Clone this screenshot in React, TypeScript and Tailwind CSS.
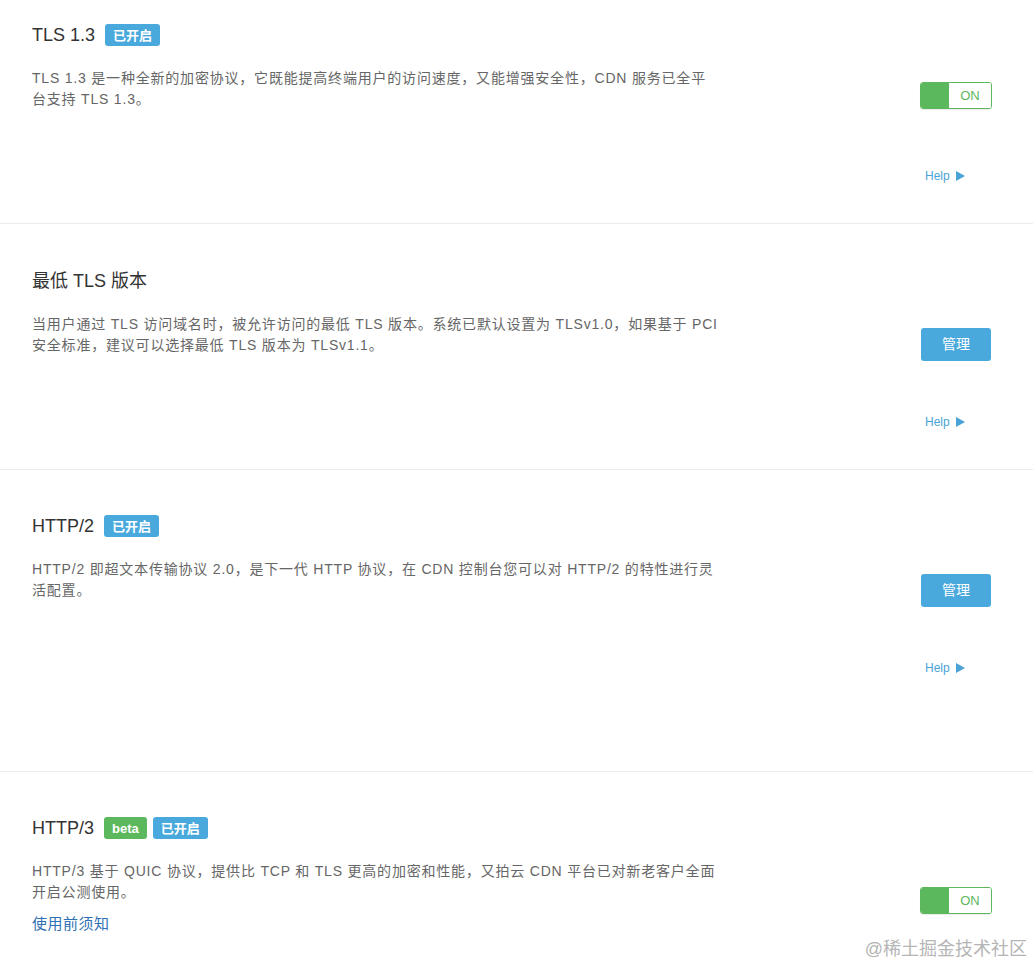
import React from "react";

const FONT = {
  fontFamily:
    '"Liberation Sans", "Noto Sans CJK SC", Arial, sans-serif',
};

const Badge = ({
  children,
  color,
}: {
  children: React.ReactNode;
  color: "blue" | "green";
}) => (
  <span
    className={`inline-flex h-[22px] items-center rounded-[3px] px-[8px] text-[13px] font-bold leading-none text-white ${
      color === "blue" ? "bg-[#4aa9dc]" : "bg-[#5cb85c]"
    }`}
  >
    {children}
  </span>
);

const Toggle = () => (
  <div className="flex h-[27px] w-[72px] overflow-hidden rounded-[3px] border border-[#5cb85c] shadow-[0_1px_1px_rgba(0,0,0,0.08)]">
    <div className="w-[28px] bg-[#5cb85c]" />
    <div className="flex flex-1 items-center justify-center bg-white text-[13px] text-[#5cb85c]">
      ON
    </div>
  </div>
);

const ManageButton = () => (
  <button className="ml-px flex h-[33px] w-[70px] items-center justify-center rounded-[3px] bg-[#4aa9dc] text-[14px] text-white">
    管理
  </button>
);

const Help = () => (
  <div className="flex items-center pl-[5px] text-[12px] leading-[16px] text-[#4aa3d6]">
    <span>Help</span>
    <svg className="ml-[6px]" width="9" height="10" viewBox="0 0 9 10">
      <polygon points="0,0 9,5 0,10" fill="#4aa3d6" />
    </svg>
  </div>
);

type SectionProps = {
  title: string;
  badges: { text: string; color: "blue" | "green" }[];
  lines: string[];
  control: "toggle" | "button";
  controlTop: number;
  showHelp?: boolean;
  link?: string;
  className: string;
};

const Section = ({
  title,
  badges,
  lines,
  control,
  controlTop,
  showHelp = true,
  link,
  className,
}: SectionProps) => (
  <section
    className={`box-border flex border-b border-[#ebebeb] pl-[32px] pr-[41px] ${className}`}
  >
    <div className="flex-1">
      <div className="flex h-[24px] items-center">
        <h3 className="text-[18px] leading-[24px] text-[#333]">{title}</h3>
        <div className="ml-[10px] flex gap-[6px]">
          {badges.map((b) => (
            <Badge key={b.text} color={b.color}>
              {b.text}
            </Badge>
          ))}
        </div>
      </div>
      <p className="mt-[21px] text-[14px] leading-[21px] tracking-[0.8px] text-[#666]">
        {lines.map((l, i) => (
          <React.Fragment key={i}>
            {l}
            {i < lines.length - 1 && <br />}
          </React.Fragment>
        ))}
      </p>
      {link && (
        <a className="mt-[10px] block text-[15px] leading-[22px] tracking-[0.5px] text-[#2f70b4]">
          {link}
        </a>
      )}
    </div>
    <div className="w-[72px]">
      <div style={{ height: controlTop }} />
      {control === "toggle" ? <Toggle /> : <ManageButton />}
      {showHelp && (
        <div className={control === "toggle" ? "mt-[59px]" : "mt-[53px]"}>
          <Help />
        </div>
      )}
    </div>
  </section>
);

export default function App() {
  return (
    <div
      className="relative h-[967px] w-full overflow-hidden bg-white"
      style={FONT}
    >
      <Section
        className="h-[224px] pt-[23px]"
        title="TLS 1.3"
        badges={[{ text: "已开启", color: "blue" }]}
        lines={[
          "TLS 1.3 是一种全新的加密协议，它既能提高终端用户的访问速度，又能增强安全性，CDN 服务已全平",
          "台支持 TLS 1.3。",
        ]}
        control="toggle"
        controlTop={59}
      />
      <Section
        className="h-[246px] pt-[45px]"
        title="最低 TLS 版本"
        badges={[]}
        lines={[
          "当用户通过 TLS 访问域名时，被允许访问的最低 TLS 版本。系统已默认设置为 TLSv1.0，如果基于 PCI",
          "安全标准，建议可以选择最低 TLS 版本为 TLSv1.1。",
        ]}
        control="button"
        controlTop={59}
      />
      <Section
        className="h-[302px] pt-[44px]"
        title="HTTP/2"
        badges={[{ text: "已开启", color: "blue" }]}
        lines={[
          "HTTP/2 即超文本传输协议 2.0，是下一代 HTTP 协议，在 CDN 控制台您可以对 HTTP/2 的特性进行灵",
          "活配置。",
        ]}
        control="button"
        controlTop={60}
      />
      <Section
        className="h-[300px] pt-[44px]"
        title="HTTP/3"
        badges={[
          { text: "beta", color: "green" },
          { text: "已开启", color: "blue" },
        ]}
        lines={[
          "HTTP/3 基于 QUIC 协议，提供比 TCP 和 TLS 更高的加密和性能，又拍云 CDN 平台已对新老客户全面",
          "开启公测使用。",
        ]}
        link="使用前须知"
        control="toggle"
        controlTop={71}
        showHelp={false}
      />
      <div className="absolute bottom-[4px] right-[6px] text-[18px] text-[#b5b5b5]">
        @稀土掘金技术社区
      </div>
    </div>
  );
}
